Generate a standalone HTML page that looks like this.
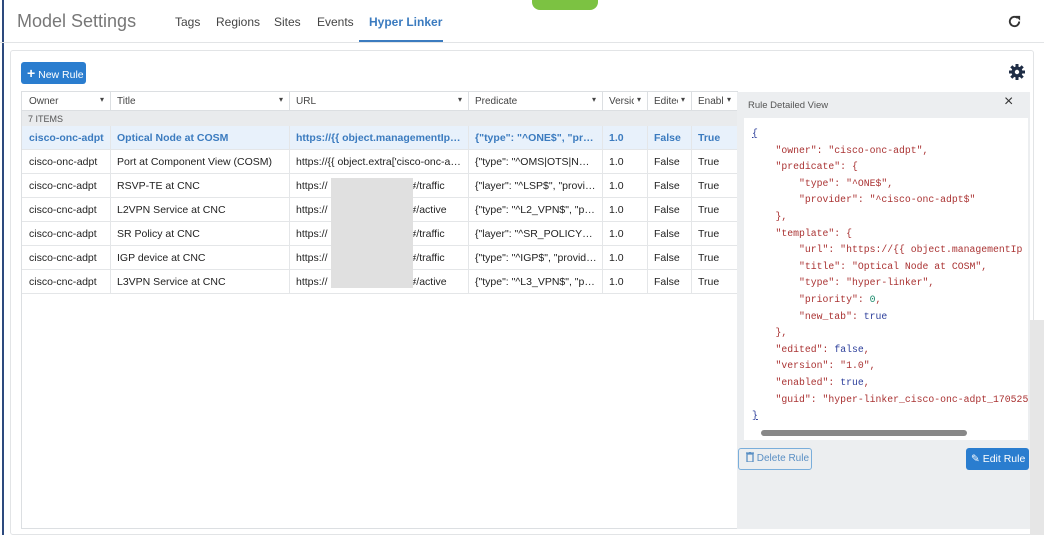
<!DOCTYPE html>
<html><head><style>
*{box-sizing:border-box;margin:0;padding:0}
body{width:1044px;height:535px;overflow:hidden;background:#fff;font-family:"Liberation Sans",sans-serif;font-size:11px;color:#222;position:relative}
.abs{position:absolute;white-space:nowrap}
.hdr{left:0;top:0;width:1044px;height:43px;border-bottom:1px solid #e2e4e6}
.title{left:17px;top:11px;font-size:18px;color:#777}
.tab{top:15px;font-size:12px;color:#444}
.cell{position:absolute;white-space:nowrap;overflow:hidden;text-overflow:ellipsis;font-size:10.5px}
.row{position:absolute;left:22px;width:715px;height:24px;border-bottom:1px solid #e4e6e8}
.mono{font-family:"Liberation Mono",monospace;font-size:9.8px;white-space:pre;color:#a33;line-height:16.6px}
.b{color:#2d3f9b}.n{color:#198a6b}
</style></head><body>
<div class="abs" style="left:2px;top:0;width:2px;height:535px;background:#2d4a7e"></div>
<div class="abs hdr"></div>
<div class="abs" style="left:532px;top:0;width:66px;height:10px;background:#7cc242;border-radius:0 0 8px 8px"></div>
<div class="abs title">Model Settings</div>
<div class="abs tab" style="left:175px">Tags</div>
<div class="abs tab" style="left:216px">Regions</div>
<div class="abs tab" style="left:274px">Sites</div>
<div class="abs tab" style="left:317px">Events</div>
<div class="abs tab" style="left:369px;color:#3b7bbf;font-weight:bold">Hyper Linker</div>
<div class="abs" style="left:359px;top:40px;width:84px;height:2px;background:#3b7bbf"></div>
<svg class="abs" style="left:1007px;top:14px" width="15" height="15" viewBox="0 0 16 16"><path d="M13 8a5 5 0 1 1-1.5-3.6" fill="none" stroke="#333" stroke-width="2"/><path d="M9 2h5v5z" fill="#333"/></svg>
<div class="abs" style="left:10px;top:50px;width:1024px;height:485px;border:1px solid #e2e4e6;border-radius:3px"></div>
<div class="abs" style="left:21px;top:62px;width:65px;height:22px;background:#2a7dcf;border-radius:3px;color:#fff;font-size:10.5px;line-height:22px;padding-left:6px"><b style="font-size:14px">+</b>&nbsp;New Rule</div>
<svg class="abs" style="left:1009px;top:64px" width="16" height="16" viewBox="0 0 16 16"><circle cx="8" cy="8" r="5.5" fill="#1f2d45"/><g stroke="#1f2d45" stroke-width="3"><path d="M8 0v16M0 8h16M2.3 2.3l11.4 11.4M13.7 2.3L2.3 13.7"/></g><circle cx="8" cy="8" r="2.2" fill="#fff"/></svg>
<div class="abs" style="left:21px;top:91px;width:717px;height:438px;border:1px solid #dcdfe2"></div>
<div class="abs" style="left:22px;top:92px;width:715px;height:19px;background:#fff;border-bottom:1px solid #dcdfe2"></div>
<div class="abs" style="left:22px;top:111px;width:715px;height:15px;background:#e9ebed;font-size:9px;color:#555;padding:3px 6px">7 ITEMS</div>
<div id="hd"></div>
<div class="abs" style="left:22px;top:126px;width:715px;height:24px;background:#e8f1fb"></div>
<div id="rows"></div>
<div class="abs" style="left:331px;top:178px;width:82px;height:110px;background:#e0e0e0"></div>
<div class="abs" style="left:737px;top:92px;width:293px;height:437px;background:#eceef0"></div>
<div class="abs" style="left:748px;top:100px;font-size:9.5px;color:#555">Rule Detailed View</div>
<div class="abs" style="left:1004px;top:93px;font-size:16px;color:#333">×</div>
<div class="abs" style="left:744px;top:118px;width:284px;height:322px;background:#fff;overflow:hidden">
<div class="mono" style="position:absolute;left:8px;top:8px"><span class="b" style="text-decoration:underline">{</span>
    "owner": "cisco-onc-adpt",
    "predicate": {
        "type": "^ONE$",
        "provider": "^cisco-onc-adpt$"
    },
    "template": {
        "url": "https://{{ object.managementIp }
        "title": "Optical Node at COSM",
        "type": "hyper-linker",
        "priority": <span class="n">0</span>,
        "new_tab": <span class="b">true</span>
    },
    "edited": <span class="b">false</span>,
    "version": "1.0",
    "enabled": <span class="b">true</span>,
    "guid": "hyper-linker_cisco-onc-adpt_1705250
<span class="b" style="text-decoration:underline">}</span></div>
<div style="position:absolute;left:17px;top:312px;width:206px;height:6px;background:#888;border-radius:3px"></div>
</div>
<div class="abs" style="left:738px;top:448px;width:74px;height:22px;border:1px solid #7aaedb;border-radius:3px;color:#5a8fc4;font-size:10px;line-height:20px;padding-left:7px"><svg width="8" height="10" viewBox="0 0 8 10" style="vertical-align:-1px"><path d="M0 1h8M3 0h2M1 2h6v8H1z" fill="none" stroke="#5a8fc4" stroke-width="1.3"/></svg> Delete Rule</div>
<div class="abs" style="left:966px;top:448px;width:63px;height:22px;background:#2a7dcf;border-radius:3px;color:#fff;font-size:10.5px;line-height:22px;padding-left:5px">✎ Edit Rule</div>
<div class="abs" style="left:1030px;top:320px;width:14px;height:215px;background:#e6e6e6"></div>
<script>
var cols=[[22,"Owner",88],[110,"Title",179],[289,"URL",179],[468,"Predicate",134],[602,"Versic",45],[647,"Editec",44],[691,"Enabl",46]];
var h="";cols.forEach(function(c){h+='<div class="cell" style="left:'+(c[0]+7)+'px;top:96px;color:#444;font-size:10px;width:'+(c[2]-20)+'px;text-overflow:clip">'+c[1]+'</div><div class="cell" style="left:'+(c[0]+c[2]-10)+'px;top:95px;font-size:8px;color:#444">▾</div>';if(c[0]>22)h+='<div class="abs" style="left:'+c[0]+'px;top:92px;width:1px;height:19px;background:#dcdfe2"></div>';});
document.getElementById("hd").innerHTML=h;
var d=[["cisco-onc-adpt","Optical Node at COSM","https://{{ object.managementIp }}/xyz",'{"type": "^ONE$", "provider"'],
["cisco-onc-adpt","Port at Component View (COSM)","https://{{ object.extra['cisco-onc-adpt']",'{"type": "^OMS|OTS|NMC|OCH"'],
["cisco-cnc-adpt","RSVP-TE at CNC","https://  /#/traffic",'{"layer": "^LSP$", "provider"'],
["cisco-cnc-adpt","L2VPN Service at CNC","https://  /#/active",'{"type": "^L2_VPN$", "provider"'],
["cisco-cnc-adpt","SR Policy at CNC","https://  /#/traffic",'{"layer": "^SR_POLICY$", "pro'],
["cisco-cnc-adpt","IGP device at CNC","https://  /#/traffic",'{"type": "^IGP$", "provider"'],
["cisco-cnc-adpt","L3VPN Service at CNC","https://  /#/active",'{"type": "^L3_VPN$", "provider"']];
var r="";d.forEach(function(x,i){var t=126+i*24;var st=i==0?'color:#3b7bbf;font-weight:bold;':'';
r+='<div class="row" style="top:'+t+'px"></div>';
var v=[x[0],x[1],x[2],x[3],"1.0","False","True"];
v.forEach(function(s,j){r+='<div class="cell" style="left:'+(cols[j][0]+7)+'px;top:'+(t+6)+'px;width:'+(cols[j][2]-12)+'px;'+st+'">'+s.replace(/ {2,}/g,function(m){return '<span style="display:inline-block;width:80px"></span>'})+'</div>';});
[110,289,468,602,647,691].forEach(function(l){r+='<div class="abs" style="left:'+l+'px;top:'+t+'px;width:1px;height:24px;background:#e4e6e8"></div>';});
});
document.getElementById("rows").innerHTML=r;
</script>
</body></html>
